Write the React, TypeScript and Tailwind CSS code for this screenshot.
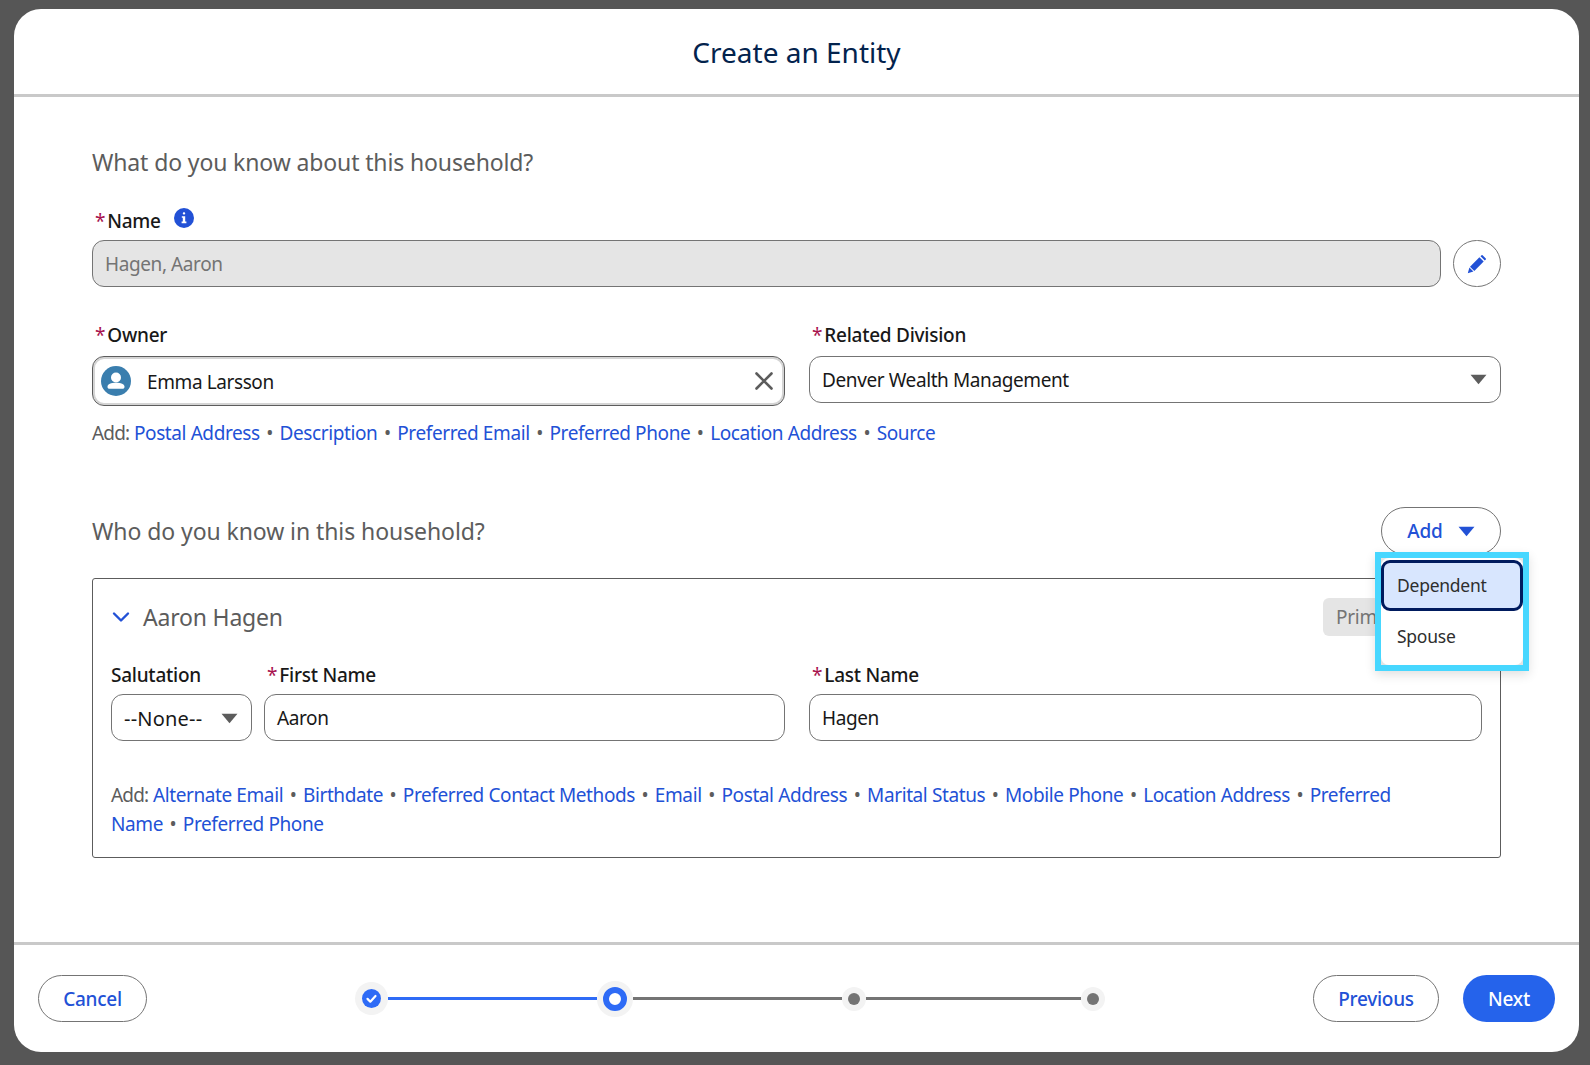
import React from "react";

const Caret = ({ className = "" }: { className?: string }) => (
  <svg viewBox="0 0 16 10" className={className} fill="currentColor"><path d="M0.5 0.5h15L8 9.5z" /></svg>
);

const Star = () => <span className="text-[#a8124f] ml-[3px] mr-[2px] font-normal">*</span>;

const Label = ({ children, req }: { children: React.ReactNode; req?: boolean }) => (
  <div className="h-[26px] flex items-center text-[19px] tracking-[-0.25px] font-medium text-[#181818] leading-none">
    {req && <Star />}
    {children}
  </div>
);

const Links = ({ items }: { items: string[] }) => (
  <>
    <span className="text-[#5c5c5c] tracking-[-0.8px]">Add:</span>{" "}
    {items.map((t, i) => (
      <React.Fragment key={t}>
        {t.split(" ").map((w, j) => (
          <React.Fragment key={j}>
            {j > 0 && " "}
            <span className="text-[#2251d6]">{w}</span>
          </React.Fragment>
        ))}
        {i < items.length - 1 && <> <span className="text-[#5c5c5c] mx-[2px]">•</span> </>}
      </React.Fragment>
    ))}
  </>
);

const Field = ({ children, className = "" }: { children: React.ReactNode; className?: string }) => (
  <div className={`h-[47px] border border-[#747474] rounded-[12px] flex items-center px-[12px] pt-[2px] text-[19px] text-[#181818] bg-white ${className}`}>
    {children}
  </div>
);

const Pill = ({ children, className = "" }: { children: React.ReactNode; className?: string }) => (
  <div className={`h-[47px] rounded-full flex items-center justify-center text-[19px] tracking-[-0.25px] font-medium pt-[2px] ${className}`}>{children}</div>
);

export default function App() {
  return (
    <div className="w-[1590px] h-[1065px] bg-[#565656] pt-[9px] pl-[14px] overflow-hidden font-['Noto_Sans',sans-serif] tracking-[-0.4px]">
      <div className="w-[1565px] h-[1043px] bg-white rounded-[27px] overflow-hidden flex flex-col">
        <div className="h-[88px] shrink-0 border-b-[3px] border-[#c9c9c9] flex items-center justify-center text-[28px] text-[#03234d] tracking-normal pt-[1px]">
          Create an Entity
        </div>

        <div className="flex-1 px-[78px] pt-[47px]">
          <div className="h-[36px] flex items-center text-[23px] text-[#5c5c5c] tracking-[-0.13px]">What do you know about this household?</div>

          <div className="mt-[28px] flex items-center gap-[13px]">
            <Label req>Name</Label>
            <svg viewBox="0 0 20 20" className="w-[20px] h-[20px] mb-[6px]">
              <circle cx="10" cy="10" r="10" fill="#2251d6" />
              <rect x="8.8" y="4.2" width="2.4" height="2.4" rx="1" fill="#fff" />
              <path d="M7.8 8.2h3.4v5.4h1.2v1.6H7.6v-1.6h1.2V9.8h-1z" fill="#fff" />
            </svg>
          </div>
          <div className="mt-[6px] flex gap-[12px]">
            <Field className="flex-1 !bg-[#e5e5e5] text-[#747474]">Hagen, Aaron</Field>
            <div className="w-[48px] h-[47px] rounded-full border border-[#747474] flex items-center justify-center">
              <svg viewBox="0 0 20 20" className="w-[20px] h-[20px]" fill="#2251d6">
                <path d="M15.6 1.2l3.2 3.2a.8.8 0 010 1.1l-1 1-4.3-4.3 1-1a.8.8 0 011.1 0z" />
                <path d="M12.4 3.3l4.3 4.3-9.4 9.4-4.3-4.3z" />
                <path d="M2.4 13.6l4 4-5.6 1.6z" />
              </svg>
            </div>
          </div>

          <div className="mt-[35px] flex gap-[24px]">
            <div className="w-[693px]">
              <Label req>Owner</Label>
              <div className="mt-[8px] h-[50px] border border-[#5c5c5c] rounded-[12px] ring-2 ring-inset ring-[#d4d4d4] flex items-center pl-[8px] pr-[10px] text-[19px] text-[#181818]">
                <svg viewBox="0 0 30 30" className="w-[30px] h-[30px] shrink-0">
                  <circle cx="15" cy="15" r="15" fill="#3a7eae" />
                  <circle cx="15" cy="11.5" r="5" fill="#fff" />
                  <path d="M6.5 20.5c0-2.4 3.6-3.8 8.5-3.8s8.5 1.4 8.5 3.8v.4c0 1.1-.9 1.9-2 1.9H8.500c-1.100 0-2-.8-2-1.900z" fill="#fff" />
                </svg>
                <span className="ml-[16px] flex-1 pt-[2px]">Emma Larsson</span>
                <svg viewBox="0 0 20 20" className="w-[20px] h-[20px]" stroke="#5c5c5c" strokeWidth="2.6" strokeLinecap="round">
                  <path d="M2.500 2.500l15 15M17.500 2.500l-15 15" />
                </svg>
              </div>
            </div>
            <div className="flex-1">
              <Label req>Related Division</Label>
              <Field className="mt-[8px] justify-between !pr-[13px]">
                <span>Denver Wealth Management</span>
                <Caret className="w-[17px] h-[11px] text-[#5c5c5c] mb-[2px]" />
              </Field>
            </div>
          </div>

          <div className="mt-[13px] h-[29px] flex items-center text-[19px]">
            <span><Links items={["Postal Address", "Description", "Preferred Email", "Preferred Phone", "Location Address", "Source"]} /></span>
          </div>

          <div className="mt-[59px] flex items-center justify-between">
            <div className="text-[23px] text-[#5c5c5c] tracking-[-0.08px]">Who do you know in this household?</div>
            <div className="relative">
              <Pill className="w-[120px] !h-[48px] border border-[#747474] text-[#2251d6] gap-[15px] !pt-[1px]">
                Add
                <Caret className="w-[17px] h-[11px]" />
              </Pill>
              <div className="absolute z-10 left-[-6px] top-[45px] w-[154px] h-[119px] border-[6px] border-[#47d7ff] bg-[#e4e4e4] shadow-[0_4px_10px_rgba(0,0,0,0.12)]">
                <div className="h-full rounded-[8px] bg-white text-[17.5px] tracking-[-0.25px] text-[#2e2e2e] pt-[2px]">
                  <div className="h-[51px] border-[3px] border-[#001b5e] rounded-[9px] bg-[#d8e6fe] flex items-center pl-[13px]">Dependent</div>
                  <div className="h-[51px] flex items-center pl-[16px]">Spouse</div>
                </div>
              </div>
            </div>
          </div>

          <div className="mt-[23px] h-[280px] border border-[#5c5c5c] rounded-[3px] px-[18px]">
            <div className="h-[38px] mt-[19px] flex items-center">
              <svg viewBox="0 0 18 12" className="w-[18px] h-[12px] ml-[1px]" fill="none" stroke="#2251d6" strokeWidth="2.400" strokeLinecap="round" strokeLinejoin="round">
                <path d="M2 2.500l7 7 7-7" />
              </svg>
              <span className="ml-[13px] text-[23px] text-[#5c5c5c] tracking-[-0.2px]">Aaron Hagen</span>
              <div className="ml-auto mr-[69px] h-[38px] w-[90px] rounded-[6px] bg-[#e5e5e5] pl-[13px] flex items-center text-[19px] tracking-[-0.25px] text-[#747474]">Primary</div>
            </div>
            <div className="mt-[26px] flex gap-[12px]">
              <div className="w-[141px]">
                <Label>Salutation</Label>
                <Field className="mt-[6px] justify-between !pr-[13px]">
                  <span className="text-[20px] tracking-[0.2px]">--None--</span>
                  <Caret className="w-[17px] h-[11px] text-[#5c5c5c]" />
                </Field>
              </div>
              <div className="w-[521px]">
                <Label req>First Name</Label>
                <Field className="mt-[6px]">Aaron</Field>
              </div>
              <div className="flex-1 ml-[12px]">
                <Label req>Last Name</Label>
                <Field className="mt-[6px]">Hagen</Field>
              </div>
            </div>
            <div className="mt-[40px] w-[1300px] text-[19px] leading-[28.500px]">
              <Links items={["Alternate Email", "Birthdate", "Preferred Contact Methods", "Email", "Postal Address", "Marital Status", "Mobile Phone", "Location Address", "Preferred Name", "Preferred Phone"]} />
            </div>
          </div>
        </div>

        <div className="h-[110px] shrink-0 border-t-[3px] border-[#c9c9c9] flex items-start pl-[24px] pr-[24px] pt-[30px]">
          <Pill className="w-[109px] border border-[#747474] text-[#2251d6]">Cancel</Pill>
          <div className="ml-[208px] h-[47px] flex items-center">
            <div className="w-[33px] h-[33px] rounded-full bg-[#f3f3f3] flex items-center justify-center">
              <svg viewBox="0 0 19 19" className="w-[19px] h-[19px]">
                <circle cx="9.500" cy="9.500" r="9.500" fill="#2e6bf6" />
                <path d="M5.500 9.900l2.800 2.800 5.200-5.700" fill="none" stroke="#fff" strokeWidth="2.200" strokeLinecap="round" strokeLinejoin="round" />
              </svg>
            </div>
            <div className="w-[209px] h-[3px] bg-[#2e6bf6]" />
            <div className="w-[36px] h-[36px] rounded-full bg-[#f3f3f3] flex items-center justify-center">
              <div className="w-[24px] h-[24px] rounded-full border-[6px] border-[#2e6bf6] bg-white" />
            </div>
            <div className="w-[209px] h-[3px] bg-[#747474]" />
            <div className="w-[24px] h-[24px] rounded-full bg-[#f3f3f3] flex items-center justify-center">
              <div className="w-[12px] h-[12px] rounded-full bg-[#747474]" />
            </div>
            <div className="w-[215px] h-[3px] bg-[#747474]" />
            <div className="w-[24px] h-[24px] rounded-full bg-[#f3f3f3] flex items-center justify-center">
              <div className="w-[12px] h-[12px] rounded-full bg-[#747474]" />
            </div>
          </div>
          <div className="ml-auto flex gap-[24px]">
            <Pill className="w-[126px] border border-[#747474] text-[#2251d6]">Previous</Pill>
            <Pill className="w-[92px] bg-[#2563eb] text-white">Next</Pill>
          </div>
        </div>
      </div>
    </div>
  );
}
